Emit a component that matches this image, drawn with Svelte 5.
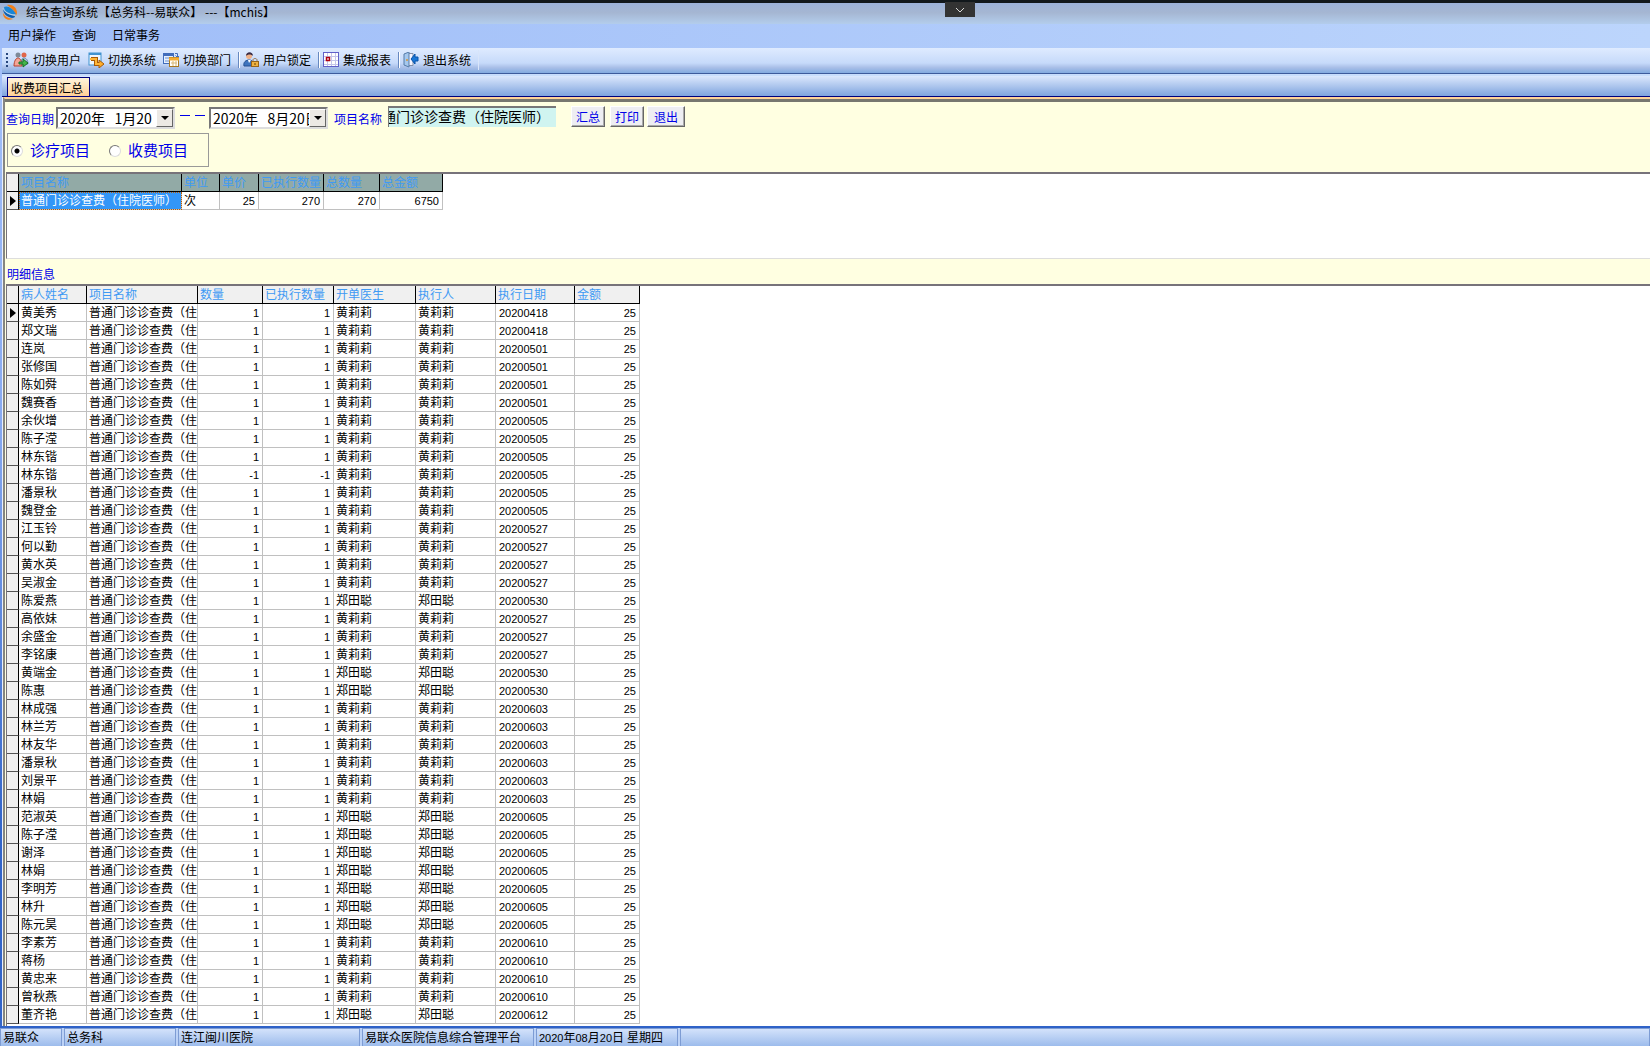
<script>
  const summaryColumns = ['项目名称', '单位', '单价', '已执行数量', '总数量', '总金额'];
  const detailColumns = ['病人姓名', '项目名称', '数量', '已执行数量', '开单医生', '执行人', '执行日期', '金额'];
  const item = '普通门诊诊查费（住院医师）';
  const A = '黄莉莉';
  const B = '郑田聪';
  const rows = [
    ['黄美秀', A, '20200418'], ['郑文瑞', A, '20200418'], ['连岚', A, '20200501'], ['张修国', A, '20200501'],
    ['陈如舜', A, '20200501'], ['魏赛香', A, '20200501'], ['余伙增', A, '20200505'], ['陈子滢', A, '20200505'],
    ['林东锴', A, '20200505'], ['林东锴', A, '20200505', -1], ['潘景秋', A, '20200505'], ['魏登金', A, '20200505'],
    ['江玉铃', A, '20200527'], ['何以勤', A, '20200527'], ['黄水英', A, '20200527'], ['吴淑金', A, '20200527'],
    ['陈爱燕', B, '20200530'], ['高依妹', A, '20200527'], ['余盛金', A, '20200527'], ['李铭康', A, '20200527'],
    ['黄端金', B, '20200530'], ['陈惠', B, '20200530'], ['林成强', A, '20200603'], ['林兰芳', A, '20200603'],
    ['林友华', A, '20200603'], ['潘景秋', A, '20200603'], ['刘景平', A, '20200603'], ['林娟', A, '20200603'],
    ['范淑英', B, '20200605'], ['陈子滢', B, '20200605'], ['谢泽', B, '20200605'], ['林娟', B, '20200605'],
    ['李明芳', B, '20200605'], ['林升', B, '20200605'], ['陈元昊', B, '20200605'], ['李素芳', A, '20200610'],
    ['蒋杨', A, '20200610'], ['黄忠来', A, '20200610'], ['曾秋燕', A, '20200610'], ['董齐艳', B, '20200612']
  ].map(([name, doctor, date, qty = 1]) => ({ name, doctor, date, qty }));
  let kind = $state('treatment');
</script>

<div class="app">
  <header class="titlebar">
    <svg class="logo" width="16" height="16" viewBox="0 0 16 16" aria-hidden="true">
      <path d="M5 1c5-1 10 2 10 8 0 1-1 2-1 3C13 7 9 4 5 1z" fill="#f07f1a" />
      <path d="M1 9c2 4 6 5 10 6-5 2-10 0-10-6z" fill="#f07f1a" />
      <path d="M2 3c4-2 9 2 12 7-2 1-5 0-7-1C4 8 2 6 2 3z" fill="#1a86d6" />
      <path d="M1 4c1 5 7 7 12 8 0 1-1 2-3 2-5-1-9-4-9-10z" fill="#0e5fb0" />
      <path d="M1 4c1 4 6 7 12 7" stroke="#bfe2fa" fill="none" stroke-width="0.7" />
    </svg>
    <h1>综合查询系统【总务科--易联众】 ---【mchis】</h1>
    <button class="pull" aria-label="展开">
      <svg width="10" height="6" viewBox="0 0 10 6"><path d="M1 1l4 4 4-4" fill="none" stroke="#ddd" /></svg>
    </button>
  </header>

  <nav class="menu">
    <button>用户操作</button><button>查询</button><button>日常事务</button>
  </nav>

  <div class="toolbar">
    <span class="grip"></span>
    <button class="tool">
      <svg width="16" height="16" viewBox="0 0 16 16" aria-hidden="true">
        <circle cx="5" cy="3" r="2.5" fill="#7d8a99" /><circle cx="11" cy="3" r="2.5" fill="#e0664a" />
        <path d="M8 12c0-4 1-6 3-6s4 2 4 6z" fill="#bcd0ea" stroke="#6683ab" />
        <path d="M1 14c0-5 2-8 4-8s4 3 4 8z" fill="#f4a596" stroke="#b6402d" />
        <path d="M6 10h4V7l5 4-5 4v-3H6z" fill="#45b649" stroke="#176e24" />
      </svg>切换用户</button>
    <button class="tool">
      <svg width="16" height="16" viewBox="0 0 16 16" aria-hidden="true">
        <rect x="1" y="1" width="12" height="12" fill="#eef7ff" stroke="#4293d0" /><path d="M1 2h12" stroke="#4293d0" stroke-width="2" />
        <path d="M3 7h5v5h4" fill="none" stroke="#a85a08" stroke-width="4" /><path d="M11 8l5 4-5 4z" fill="#ffae2b" stroke="#a85a08" />
        <path d="M2 7h6v5h4" fill="none" stroke="#ffb638" stroke-width="2" />
      </svg>切换系统</button>
    <button class="tool">
      <svg width="16" height="16" viewBox="0 0 16 16" aria-hidden="true">
        <rect x="0.500" y="1.500" width="10" height="10" fill="#e6f0ff" stroke="#426dbb" /><path d="M0 2.500h11" stroke="#426dbb" stroke-width="3" /><path d="M2 6h4M2 9h4" stroke="#6e91ce" />
        <path d="M12 1.500h2.500V5M12.500 3.500l2 2 2-2" stroke="#426dbb" fill="none" />
        <rect x="6.500" y="5.500" width="9" height="9" fill="#fff" stroke="#a87822" /><path d="M6 7h10" stroke="#f5ad32" stroke-width="3" /><path d="M8 11h6M10 9v5M13 9v5" stroke="#d7b574" />
      </svg>切换部门</button>
    <span class="sep"></span>
    <button class="tool">
      <svg width="16" height="16" viewBox="0 0 16 16" aria-hidden="true">
        <circle cx="6" cy="4" r="3" fill="#efb188" /><path d="M3 4c0-5 7-5 7 0C8 2 5 2 3 4z" fill="#382c47" />
        <path d="M1 14c-1-4 2-6 5-6s5 2 5 6z" fill="#3f74be" stroke="#244f91" /><path d="M5 8l1 3 2-3z" fill="#fff" />
        <path d="M10 10V8c0-2 4-2 4 0v2" fill="none" stroke="#987245" /><rect x="8.500" y="9.500" width="7" height="5" fill="#efb242" stroke="#96641b" /><path d="M12 11v2" stroke="#684000" />
      </svg>用户锁定</button>
    <span class="sep"></span>
    <button class="tool">
      <svg width="16" height="16" viewBox="0 0 16 16" aria-hidden="true">
        <rect x="0.500" y="0.500" width="15" height="14" fill="#fff" stroke="#6060c8" /><path d="M1 4.500h14M1 8.500h14M1 12.500h14M4.500 1v13M8.500 1v13M12.500 1v13" stroke="#c5c5ea" />
        <rect x="3.500" y="5.500" width="3" height="3" fill="#fff" stroke="#b00010" stroke-width="1.500" />
      </svg>集成报表</button>
    <span class="sep"></span>
    <button class="tool">
      <svg width="16" height="16" viewBox="0 0 16 16" aria-hidden="true">
        <path d="M4 1.500h6v12H4" fill="#f4f4ff" stroke="#8290a8" /><path d="M1 2l5-2v15l-5-2z" fill="#a5c8ee" stroke="#557ba8" /><circle cx="4" cy="8" r="1" fill="#d79838" />
        <path d="M15 5h-3V2L8 7l4 5V9h3z" fill="#1976d6" stroke="#0953a8" />
      </svg>退出系统</button>
    <span class="toolend"></span>
  </div>

  <div class="tabs"><button class="tab">收费项目汇总</button></div>

  <main>
    <form class="query" onsubmit={(e) => e.preventDefault()}>
      <div class="filters">
        <label for="from">查询日期</label>
        <span class="date first"><input id="from" value="2020年   1月20" /><button type="button" aria-label="选择开始日期"><i></i></button></span>
        <span class="dash"><i></i><i></i></span>
        <span class="date"><input aria-label="结束日期" value="2020年   8月20日" /><button type="button" aria-label="选择结束日期"><i></i></button></span>
        <label class="itemlabel" for="item">项目名称</label>
        <span class="itembox"><input id="item" value={item} /></span>
        <button class="btn">汇总</button>
        <button class="btn" type="button">打印</button>
        <button class="btn exit" type="button">退出</button>
      </div>
      <fieldset>
        <label><input type="radio" value="treatment" bind:group={kind} />诊疗项目</label>
        <label><input type="radio" value="charge" bind:group={kind} />收费项目</label>
      </fieldset>
    </form>

    <section class="pane summary">
      <table>
        <colgroup><col class="w12" /><col class="w163" /><col class="w38" /><col class="w39" /><col class="w65" /><col class="w56" /><col class="w63" /></colgroup>
        <thead><tr><th class="ind"></th>{#each summaryColumns as c}<th>{c}</th>{/each}</tr></thead>
        <tbody>
          <tr><td class="ind"><i class="cur"></i></td><td class="selected">{item}</td><td>次</td><td class="num">25</td><td class="num">270</td><td class="num">270</td><td class="num">6750</td></tr>
        </tbody>
      </table>
    </section>

    <h2>明细信息</h2>

    <section class="pane detail">
      <table>
        <colgroup><col class="w12" /><col class="w68" /><col class="w111" /><col class="w65" /><col class="w71" /><col class="w82" /><col class="w80" /><col class="w79" /><col class="w65" /></colgroup>
        <thead><tr><th class="ind"></th>{#each detailColumns as c}<th>{c}</th>{/each}</tr></thead>
        <tbody>
          {#each rows as r, i}
            <tr>
              <td class="ind">{#if i === 0}<i class="cur"></i>{/if}</td>
              <td>{r.name}</td><td>{item}</td><td class="num">{r.qty}</td><td class="num">{r.qty}</td>
              <td>{r.doctor}</td><td>{r.doctor}</td><td class="day">{r.date}</td><td class="num">{r.qty * 25}</td>
            </tr>
          {/each}
        </tbody>
      </table>
    </section>
  </main>

  <footer>
    <span class="s1">易联众</span><span class="s2">总务科</span><span class="s3">连江闽川医院</span>
    <span class="s4">易联众医院信息综合管理平台</span>
    <span class="s5"><b>2020</b>年<b>08</b>月<b>20</b>日<b>&nbsp; </b>星期四</span><span class="s6"></span>
  </footer>
</div>

<style>
  :global(body) { margin: 0; }
  .app, button, input { font-family: "Liberation Sans", "Noto Sans CJK SC", sans-serif; font-size: 12px; }
  .app { display: flex; flex-direction: column; min-height: 100vh; background: linear-gradient(#a8c4fa, #88aaf0 40%, #3265c8 80%); color: #000; line-height: 16px; overflow: hidden; }
  .app, .app * { box-sizing: border-box; }
  button { border: 0; background: none; padding: 0; color: inherit; white-space: nowrap; }
  input { color: #000; min-width: 0; }

  .titlebar { position: relative; display: flex; align-items: flex-start; gap: 8px; height: 24px; padding: 1px 2px 0; border-top: 3px solid #12181c; background: linear-gradient(#9cb2da, #a5b6d2 45%, #b3cdec); }
  h1 { margin: 0; font-size: 12px; font-weight: 400; line-height: 16px; font-family: "Noto Sans CJK SC", sans-serif; }
  .pull { position: absolute; top: -1px; left: 945px; width: 30px; height: 15px; background: #333; display: flex; align-items: center; justify-content: center; }
  .menu { display: flex; align-items: flex-start; gap: 16px; height: 24px; padding: 2px 0 0 8px; background: linear-gradient(90deg, #9fbdf8, #bcd5fc); }
  .toolbar { display: flex; align-items: center; height: 26px; margin-left: 2px; padding: 0 4px 2px; background: linear-gradient(#dfebff, #c6dafa 60%, #a9bfe8 78%, #82aae0); border-bottom: 1px solid #3d5b9c; }
  .grip { width: 2px; height: 14px; margin-right: 5px; background: repeating-linear-gradient(#27467d 0 2px, transparent 2px 4px); }
  .tool { display: flex; align-items: center; gap: 4px; margin-right: 7px; }
  .sep { width: 2px; height: 16px; margin-right: 3px; border-left: 1px solid #6688c0; border-right: 1px solid #fff; }
  .toolend { width: 1px; height: 20px; background: #d8e5fa; }

  .tabs { display: flex; align-items: flex-end; height: 23px; margin-left: 2px; padding: 0 5px; border-top: 2px solid #c8ddfc; border-bottom: 1px solid #00007c; background: linear-gradient(#dce8fd, #7fa4de); }
  .tab { height: 19px; width: 83px; padding-left: 3px; text-align: left; border: 1px solid #00007c; border-bottom: 0; background: linear-gradient(#fff5dc, #ffd096); }

  main { flex: 1; display: flex; flex-direction: column; margin-left: 3px; border-top: 2px solid #ffd39a; border-left: 2px solid #85857f; background: #ffffe1; box-shadow: -1px 0 #e8eefc; }
  .query { border-top: 3px solid #77776f; height: 73px; padding: 4px 1px 0; color: #0000e8; }
  .filters { display: flex; align-items: flex-start; height: 24px; }
  .filters label { padding-top: 6px; }
  .date { display: flex; width: 119px; height: 22px; margin-top: 1px; border: 2px solid; border-color: #777 #ddd #ddd #777; background: #fff; }
  .first { margin-left: 2px; }
  .date input { flex: 1; border: 0; padding: 0 0 0 2px; font: 14px "Noto Sans CJK SC", sans-serif; background: #fff; white-space: pre; }
  .date button { width: 17px; background: #ece9e4; border: 1px solid; border-color: #fff #666 #666 #fff; display: flex; align-items: center; justify-content: center; }
  .date button i { border: 4px solid transparent; border-top-color: #000; border-bottom: 0; }
  .dash { display: flex; gap: 5px; padding: 9px 4px 0 5px; }
  .dash i { width: 10px; height: 1px; background: #0000e8; }
  .itemlabel { margin-left: 6px; }
  .itembox { display: flex; justify-content: flex-end; width: 168px; height: 21px; margin-left: 6px; overflow: hidden; border-top: 2px solid #777; border-left: 1px solid #777; background: #d0f4f0; }
  .itembox input { flex: none; width: 188px; height: 16px; border: 0; padding: 0; background: transparent; font: 14px "Noto Sans CJK SC", sans-serif; }
  .btn { width: 34px; height: 21px; margin-right: 5px; background: #eeeef2; border: 1px solid; border-color: #fff #666 #666 #fff; box-shadow: inset -1px -1px #aaa; }
  .btn:nth-last-child(2) { margin-right: 3px; }
  .itembox + .btn { margin-left: 15px; }
  .exit { width: 38px; margin-right: 0; }
  fieldset { display: flex; gap: 19px; width: 202px; height: 34px; margin: 3px 0 0 1px; padding: 2px 3px 0; border: 1px solid #9a9a98; align-items: center; }
  fieldset label { display: flex; align-items: center; gap: 7px; font-size: 15px; }
  fieldset input { appearance: none; width: 12px; height: 12px; margin: 0; border: 1px solid; border-color: #777 #ddd #ddd #777; border-radius: 50%; background: #fff; }
  fieldset input:checked { background: radial-gradient(#000 0 2px, #fff 3px); }

  .pane { border-top: 2px solid #77737a; background: #fff; margin-left: 1px; border-left: 1px solid #77737a; }
  .summary { height: 87px; border-bottom: 1px solid #ddd; }
  h2 { margin: 0; padding: 8px 0 0 2px; height: 25px; font-size: 12px; line-height: 16px; font-weight: 400; color: #0000e8; }
  .detail { flex: 1; }
  table { border-collapse: separate; border-spacing: 0; table-layout: fixed; width: min-content; line-height: 16px; }
  th, td { height: 18px; padding: 1px 1px 0 2px; overflow: hidden; white-space: nowrap; text-align: left; font-weight: 400; border-right: 1px solid #c0c0c0; border-bottom: 1px solid #c0c0c0; }
  th { color: #3f9af4; background: #f0f0f0; border-color: #000; }
  .summary th:not(.ind) { background: #92aaa6; }
  .num, .day { font-size: 11px; padding-right: 3px; }
  .num { text-align: right; }
  .day { padding-left: 3px; }
  .ind { background: #f0f0f0; border-color: #000; padding: 0; }
  td.ind { border-bottom-color: #555; }
  .cur { display: block; width: 0; border: 5px solid transparent; border-left: 6px solid #000; border-right: 0; margin-left: 3px; }
  .selected { background: #3296f8; color: #fff; outline: 1px dotted #b85c00; outline-offset: -1px; }
  .w12 { width: 12px; } .w38 { width: 38px; } .w39 { width: 39px; } .w56 { width: 56px; } .w63 { width: 63px; } .w65 { width: 65px; } .w68 { width: 68px; }
  .w71 { width: 71px; } .w79 { width: 79px; } .w80 { width: 80px; } .w82 { width: 82px; } .w111 { width: 111px; } .w163 { width: 163px; }

  footer { display: flex; gap: 2px; height: 20px; border-top: 2px solid #2f62c8; background: #bcd2f6; }
  footer span { border: 1px solid #7d9cd4; border-bottom: 0; padding: 1px 2px 0; line-height: 16px; background: linear-gradient(#d3e2fb, #9dbcec); white-space: nowrap; overflow: hidden; }
  footer b { font-size: 11px; font-weight: 400; }
  .s1 { width: 62px; } .s2 { width: 112px; } .s3 { width: 182px; } .s4 { width: 172px; } .s5 { width: 142px; } .s6 { flex: 1; }
</style>
